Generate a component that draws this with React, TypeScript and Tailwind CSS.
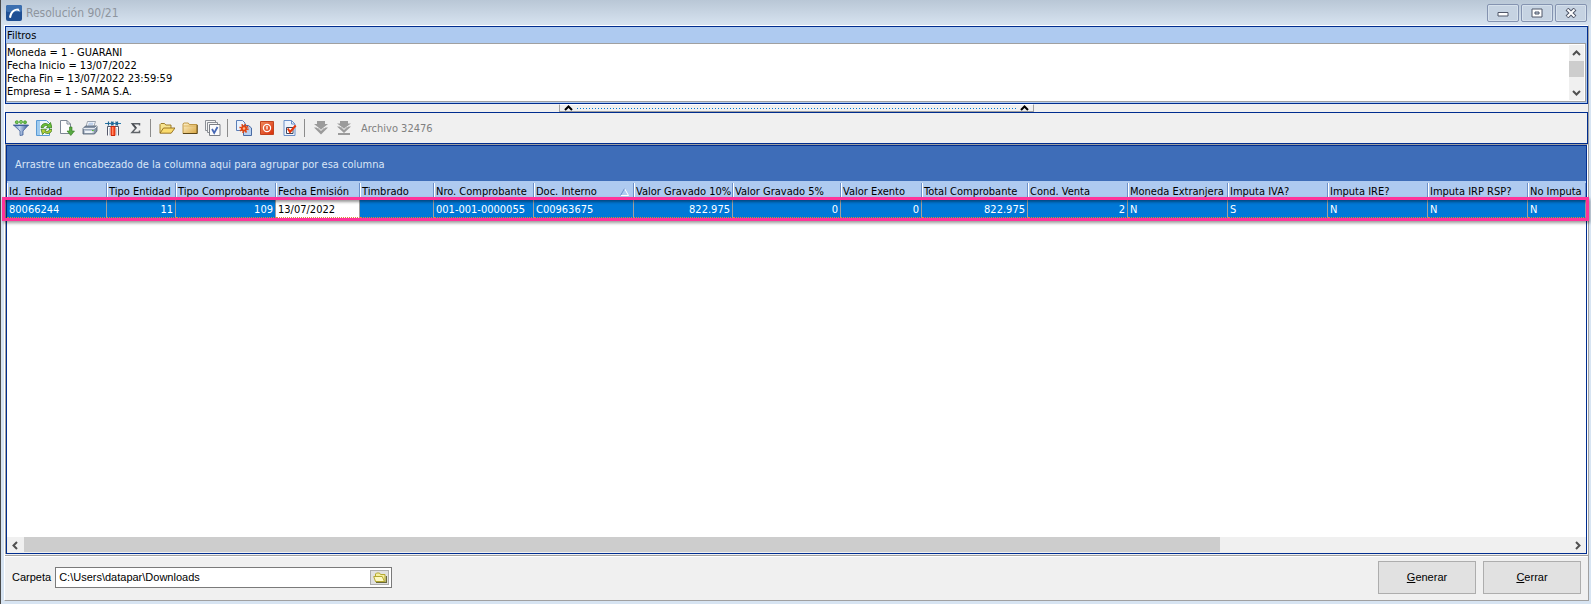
import { useState } from "react";
import type { ReactNode } from "react";

type Column = {
  title: string;
  value: string;
  width?: string;
  right?: boolean;
  sorted?: boolean;
};

const columns: Column[] = [
  { title: "Id. Entidad", value: "80066244", width: "w-[100px]" },
  { title: "Tipo Entidad", value: "11", width: "w-[69px]", right: true },
  { title: "Tipo Comprobante", value: "109", width: "w-[100px]", right: true },
  { title: "Fecha Emisión", value: "13/07/2022", width: "w-[84px]" },
  { title: "Timbrado", value: "", width: "w-[74px]" },
  { title: "Nro. Comprobante", value: "001-001-0000055", width: "w-[100px]" },
  { title: "Doc. Interno", value: "C00963675", width: "w-[100px]", sorted: true },
  { title: "Valor Gravado 10%", value: "822.975", width: "w-[99px]", right: true },
  { title: "Valor Gravado 5%", value: "0", width: "w-[108px]", right: true },
  { title: "Valor Exento", value: "0", width: "w-[81px]", right: true },
  { title: "Total Comprobante", value: "822.975", width: "w-[106px]", right: true },
  { title: "Cond. Venta", value: "2", width: "w-[100px]", right: true },
  { title: "Moneda Extranjera", value: "N", width: "w-[100px]" },
  { title: "Imputa IVA?", value: "S", width: "w-[100px]" },
  { title: "Imputa IRE?", value: "N", width: "w-[100px]" },
  { title: "Imputa IRP RSP?", value: "N", width: "w-[100px]" },
  { title: "No Imputa", value: "N" },
];

const filters = [
  "Moneda = 1 - GUARANI",
  "Fecha Inicio = 13/07/2022",
  "Fecha Fin = 13/07/2022 23:59:59",
  "Empresa = 1 - SAMA S.A.",
].join("\n");

const Icon = ({ children }: { children: ReactNode }) => (
  <svg width="16" height="16" viewBox="0 0 16 16" fill="none">
    {children}
  </svg>
);

const FilterIcon = () => (
  <Icon>
    <defs>
      <linearGradient id="funnel" x1="0" x2="1" y1="0" y2="0">
        <stop offset="0" stopColor="#5f82bb" />
        <stop offset=".4" stopColor="#c3d5ef" />
        <stop offset="1" stopColor="#2f5090" />
      </linearGradient>
    </defs>
    <circle cx="3.800" cy="2.200" r="1.500" fill="#7cc65a" stroke="#3f9a2a" strokeWidth=".8" />
    <circle cx="8" cy="1.900" r="1.500" fill="#8fd070" stroke="#3f9a2a" strokeWidth=".8" />
    <circle cx="12" cy="2.300" r="1.500" fill="#6bbb4c" stroke="#3f9a2a" strokeWidth=".8" />
    <path d="M.5 5h15L10 11v4l-3 .5V11z" fill="url(#funnel)" stroke="#3f609b" strokeWidth=".8" />
    <path d="M.5 5.500h15" stroke="#3f609b" />
  </Icon>
);

const RefreshIcon = () => (
  <Icon>
    <path d="M.5.5h10l3 3v12H.5z" fill="#eef6fd" stroke="#5a9bd6" />
    <path d="M1 1h3v14H1z" fill="#9fcbef" />
    <path d="M5 7.500C5.500 3.500 9.500 2.500 12.500 4.500L14.500 2.500 16 7.800h-5.500L12 6.200C10 5 8 5.500 7.500 7.500z" fill="#6cc23a" stroke="#2a7312" strokeWidth=".7" />
    <path d="M16 9.500c-.5 4-4.500 5-7.500 3L6.500 14.500 5 9.200h5.500L9 10.800c2 1.200 4 .7 4.500-1.300z" fill="#b5cf3a" stroke="#2a7312" strokeWidth=".7" />
  </Icon>
);

const ExportIcon = () => (
  <Icon>
    <path d="M1.500.5h6.500l3.500 3.500v9.500h-10z" fill="#fdfdfd" stroke="#7d8794" />
    <path d="M8 .5V4h3.500" stroke="#7d8794" />
    <path d="M10.500 7H13v4h2.500l-3.700 4.500L8 11h2.500z" fill="#58a843" stroke="#2f7a1c" strokeWidth=".6" />
  </Icon>
);

const PrinterIcon = () => (
  <Icon>
    <path d="M5.500 1.500h8L11.500 7H4z" fill="#fff" stroke="#7f8a99" strokeWidth=".8" />
    <path d="M6.500 3.200h5M6 4.900h5" stroke="#86a8d8" strokeWidth=".8" />
    <path d="M1 8.500L3.500 6H15v5l-2.500 3H1z" fill="#8795a8" stroke="#4f5d70" strokeWidth=".8" />
    <path d="M1.500 8.600h10.800L14.800 6.400" stroke="#f2f5f9" />
    <path d="M2 9.700h10v3.500H2z" fill="#b8c3d2" />
    <path d="M3 11h7.500v2H3z" fill="#eef3f8" />
    <path d="M10 10h1.700v1H10z" fill="#4fc02a" />
  </Icon>
);

const ColumnsIcon = () => (
  <Icon>
    <path d="M0 3.500h16" stroke="#2b7cae" />
    <path d="M3.500 1.500v4M1.500 3.500h3M8 1.500v4M12.500 1.500v4M6 1.800l2 1.700-2 1.700M10.500 1.800l2 1.700-2 1.700" stroke="#1f6694" strokeWidth="1.200" />
    <path d="M2.500 15.500v-9h11v9" fill="#fff" stroke="#55596a" />
    <path d="M6 6.500h4v9H6z" fill="#ff4a1f" stroke="#c92a10" />
    <path d="M7.200 7h1v8h-1z" fill="#ff9a7a" />
    <path d="M4.500 8v7.500M11.700 8v7.500" stroke="#c4c8d4" />
  </Icon>
);

const SumIcon = () => (
  <Icon>
    <path d="M11.500 5.500V3.800H4.300L8 8l-4 4.500h7.500v-2" stroke="#5f6368" strokeWidth="1.500" />
    <path d="M4.500 4L8 8" stroke="#4a4d52" strokeWidth="1.800" />
  </Icon>
);

const FolderOpenIcon = () => (
  <Icon>
    <path d="M1 13V4.500l1-1h3.500l1.300 1.500H12v3" fill="#f7e48f" stroke="#94731c" strokeWidth=".9" />
    <path d="M1 13.200L4.500 8H16l-3.800 5.200z" fill="#fbdc6e" stroke="#8f6a1c" strokeWidth=".9" />
  </Icon>
);

const FolderIcon = () => (
  <Icon>
    <defs>
      <linearGradient id="folder" x1="0" x2="1" y1="0" y2="1">
        <stop offset="0" stopColor="#fff3cf" />
        <stop offset="1" stopColor="#d9a640" />
      </linearGradient>
    </defs>
    <path d="M1 4l.8-1h4.500l1 1.500H15v9H1z" fill="url(#folder)" stroke="#b98e38" strokeWidth=".9" />
    <path d="M1.500 6h13" stroke="#d8ae56" strokeWidth=".8" />
    <path d="M1 13.500h14.200V5" stroke="#5d4718" />
  </Icon>
);

const CheckAllIcon = () => (
  <Icon>
    <path d="M.5.500h10v10H.5z" fill="#f4f4f4" stroke="#8b8f95" />
    <path d="M2.500 2.500h10v10h-10z" fill="#f4f4f4" stroke="#8b8f95" />
    <path d="M4.500 4.500h10.500v11H4.500z" fill="#fbfbfb" stroke="#7b7f86" />
    <path d="M7 9l2.200 4L12.500 7" stroke="#4668b5" strokeWidth="1.800" />
  </Icon>
);

const ProcessIcon = () => (
  <Icon>
    <path d="M.5.5h6L9 3v7.500H.5z" fill="#eaf2fd" stroke="#5a7fb8" />
    <path d="M7.500 5.500h5L15.500 8v7.500h-8z" fill="#b9d1f1" stroke="#4a6ba3" />
    <circle cx="8" cy="8.500" r="3.700" stroke="#e2450f" strokeWidth="2" strokeDasharray="1.450 1.450" />
    <circle cx="8" cy="8.500" r="2.200" fill="#ffb48a" stroke="#e2450f" strokeWidth="1.800" />
  </Icon>
);

const PowerIcon = () => (
  <Icon>
    <defs>
      <linearGradient id="power" x1="0" x2="1" y1="0" y2="1">
        <stop offset="0" stopColor="#f08a5c" />
        <stop offset="1" stopColor="#d92c08" />
      </linearGradient>
    </defs>
    <path d="M1.500 1.500h13v13h-13z" fill="url(#power)" stroke="#c0431f" />
    <circle cx="8" cy="8" r="3.600" stroke="#fff" strokeWidth="1.200" />
    <path d="M8 6v3.500" stroke="#fff" strokeWidth="1.300" />
  </Icon>
);

const ReportCheckIcon = () => (
  <Icon>
    <path d="M2 .5h7.500L13 4v11.500H2z" fill="#eef4fd" stroke="#6a90c9" />
    <path d="M9.500.5V4H13" stroke="#6a90c9" />
    <path d="M4.500 7.500h6.500v6H4.500z" fill="#fff" stroke="#3d4a66" />
    <path d="M5.800 8.500L8 12l5.700-6.500" stroke="#e8380c" strokeWidth="2" />
  </Icon>
);

const DownIcon = () => (
  <Icon>
    <path d="M4 1h8v3h3L8 9.500 1 4h3z" fill="#9b9b9b" />
    <path d="M1 7.500h2.500L8 11l4.500-3.500H15L8 14.500z" fill="#9b9b9b" />
    <path d="M5 8l3 2.500L11 8" stroke="#bdbdbd" />
  </Icon>
);

const DownAllIcon = () => (
  <Icon>
    <path d="M4 1h8v2.500h3L8 8.500 1 3.500h3z" fill="#9b9b9b" />
    <path d="M1 6.500h2.500L8 10l4.500-3.500H15L8 13z" fill="#9b9b9b" />
    <path d="M5 7l3 2.500L11 7" stroke="#bdbdbd" />
    <path d="M2 13h12v2H2z" fill="#9b9b9b" />
  </Icon>
);

const toolGroups = [
  [
    { label: "Filtrar", icon: <FilterIcon /> },
    { label: "Actualizar", icon: <RefreshIcon /> },
    { label: "Exportar", icon: <ExportIcon /> },
    { label: "Imprimir", icon: <PrinterIcon /> },
    { label: "Columnas", icon: <ColumnsIcon /> },
    { label: "Totales", icon: <SumIcon /> },
  ],
  [
    { label: "Abrir", icon: <FolderOpenIcon /> },
    { label: "Carpeta de archivos", icon: <FolderIcon /> },
    { label: "Marcar todos", icon: <CheckAllIcon /> },
  ],
  [
    { label: "Procesar", icon: <ProcessIcon /> },
    { label: "Detener", icon: <PowerIcon /> },
    { label: "Verificar", icon: <ReportCheckIcon /> },
  ],
  [
    { label: "Bajar", icon: <DownIcon /> },
    { label: "Bajar todo", icon: <DownAllIcon /> },
  ],
];

const arrowPaths = {
  up: "M1 6l3.500-3.500L8 6",
  down: "M1 3l3.500 3.500L8 3",
  left: "M6 1L2.500 4.500 6 8",
  right: "M3 1l3.500 3.500L3 8",
};

const Arrow = ({ dir, color = "#505050" }: { dir: keyof typeof arrowPaths; color?: string }) => (
  <svg width="9" height="9" viewBox="0 0 9 9" fill="none">
    <path d={arrowPaths[dir]} stroke={color} strokeWidth="2" />
  </svg>
);

const WindowButton = ({ label, children }: { label: string; children: ReactNode }) => (
  <button
    aria-label={label}
    className="w-8 h-[18px] flex items-center justify-center rounded-[2px] border border-[#8493b0] bg-[#c6d3e2] shadow-[inset_0_0_0_1px_#d6e1ec]"
  >
    <svg width="12" height="10" viewBox="0 0 12 10" fill="none">
      {children}
    </svg>
  </button>
);

const TitleBar = () => (
  <header className="h-[25px] shrink-0 flex items-start justify-between pl-[5px] pr-1 bg-linear-to-b from-[#b9c7d6] to-[#d7e3f0]">
    <div className="flex items-center gap-1 pt-[5px]">
      <svg width="16" height="16" viewBox="0 0 16 16">
        <rect width="16" height="16" rx="2" fill="#1f4f94" />
        <rect width="16" height="7" rx="2" fill="#3b6fb0" />
        <path d="M3 12.500C4 7 6.500 3.500 12.500 3.500l1.500 3-3-1C7.500 6 6 8.500 5 13z" fill="#fff" />
      </svg>
      <h1 className="text-[12px] leading-4 text-[#8e959e]">Resolución 90/21</h1>
    </div>
    <div className="flex gap-[2px] pt-1">
      <WindowButton label="Minimizar">
        <path d="M1 4.500h10v3.500H1z" fill="#fff" stroke="#4f5668" />
      </WindowButton>
      <WindowButton label="Maximizar">
        <path d="M1 1h10v8H1z" fill="#fff" stroke="#4f5668" />
        <path d="M4 4h4v2H4z" fill="#c6d3e2" stroke="#4f5668" />
      </WindowButton>
      <WindowButton label="Cerrar ventana">
        <path d="M2 1l8 8M10 1L2 9" stroke="#4f5668" strokeWidth="4" />
        <path d="M2.500 1.500l7 7M9.500 1.500l-7 7" stroke="#fff" strokeWidth="2" />
      </WindowButton>
    </div>
  </header>
);

const FiltersPanel = () => (
  <section className="shrink-0 border border-[#002d8f] bg-[#aecaf0] pb-px pr-px">
    <label htmlFor="filtros" className="block h-4 pl-px leading-[18px]">
      Filtros
    </label>
    <div className="flex h-[59px] bg-white border border-[#a0a0a0]">
      <textarea
        id="filtros"
        readOnly
        value={filters}
        className="flex-1 resize-none overflow-hidden pt-[2px] leading-[13px] outline-none"
      />
      <div className="w-[15px] my-px mr-px flex flex-col bg-[#f0f0f0]">
        <button aria-label="Subir" className="h-4 flex items-center justify-center">
          <Arrow dir="up" />
        </button>
        <div className="h-4 bg-[#cdcdcd]" />
        <div className="flex-1" />
        <button aria-label="Bajar lista" className="h-4 flex items-center justify-center">
          <Arrow dir="down" />
        </button>
      </div>
    </div>
  </section>
);

const Splitter = () => (
  <div className="h-2 shrink-0 flex justify-center">
    <button
      aria-label="Ocultar filtros"
      className="w-[30%] flex items-center gap-1 px-1 border border-t-white border-l-[#a0a0a0] border-r-[#a0a0a0] border-b-[#a0a0a0]"
    >
      <Arrow dir="up" color="#000" />
      <span className="flex-1 h-px bg-[repeating-linear-gradient(90deg,#0078d7_0_1px,transparent_1px_3px)]" />
      <Arrow dir="up" color="#000" />
    </button>
  </div>
);

const Toolbar = () => (
  <div className="h-8 shrink-0 flex items-center border border-[#002d8f] pl-[3px]">
    {toolGroups.map((group, index) => (
      <div key={index} className="flex items-center">
        {index > 0 && <span className="w-px h-[18px] ml-[3px] mr-1 bg-[#8c8c8c]" />}
        {group.map((tool) => (
          <button
            key={tool.label}
            aria-label={tool.label}
            className="w-[23px] h-[22px] flex items-center justify-center"
          >
            {tool.icon}
          </button>
        ))}
      </div>
    ))}
    <span className="pl-[6px] pt-[2px] text-[#808080]">Archivo 32476</span>
  </div>
);

const Grid = () => (
  <section className="flex-1 min-h-0 flex flex-col border-t border-l border-r border-t-[#a0a0a0] border-l-[#a0a0a0] border-r-white">
    <div className="flex-1 min-h-0 flex flex-col border border-[#002d8f] bg-white">
      <div className="h-[35px] shrink-0 flex items-center pl-2 pt-[3px] bg-[#3e6db8] text-[#d9e6f7]">
        Arrastre un encabezado de la columna aqui para agrupar por esa columna
      </div>
      <div className="flex-1 min-h-0 relative">
        <table className="w-full table-fixed border-collapse">
          <thead>
            <tr className="h-[19px] bg-[#aecaf0]">
              {columns.map((col) => (
                <th key={col.title} className={`${col.width ?? ""} p-0 font-normal text-left`}>
                  <div className="h-[17px] leading-[17px] mt-[2px] flex items-center justify-between pl-px border-l border-l-white border-r border-r-[#6b8fc9] whitespace-nowrap overflow-hidden">
                    {col.title}
                    {col.sorted && (
                      <svg width="9" height="8" viewBox="0 0 9 8" fill="none" className="mr-1">
                        <path d="M.5 7.500h8L4.500.5" stroke="#fff" />
                        <path d="M4.500.5L.5 7.500" stroke="#6b8fc9" />
                      </svg>
                    )}
                  </div>
                </th>
              ))}
            </tr>
          </thead>
          <tbody>
            <tr className="h-[18px] bg-[#0078d7] text-white">
              {columns.map((col) => (
                <td
                  key={col.title}
                  className={`p-0 ${col.title === "Fecha Emisión" ? "bg-white text-black" : ""}`}
                >
                  <div
                    className={`h-[18px] leading-5 px-[2px] border-r border-r-[#a0a0a0] border-b border-b-[#e08a3c] [border-bottom-style:dotted] whitespace-nowrap ${
                      col.right ? "text-right" : ""
                    }`}
                  >
                    {col.value}
                  </div>
                </td>
              ))}
            </tr>
          </tbody>
        </table>
        {/* highlight frame laid over the selected row */}
        <div className="absolute top-4 -left-[5px] -right-[3px] h-6 border-[3px] border-[#ff3399] pointer-events-none shadow-[1px_2px_3px_#00000066,inset_1px_2px_3px_#00000066]" />
      </div>
      <div className="h-4 shrink-0 flex bg-[#f0f0f0]">
        <button aria-label="Izquierda" className="w-[17px] flex items-center justify-center">
          <Arrow dir="left" />
        </button>
        <div className="flex-1 pb-px">
          <div className="w-[77.4%] h-full bg-[#cdcdcd]" />
        </div>
        <button aria-label="Derecha" className="w-[17px] flex items-center justify-center">
          <Arrow dir="right" />
        </button>
      </div>
    </div>
  </section>
);

const Footer = () => {
  const [folder, setFolder] = useState("C:\\Users\\datapar\\Downloads");

  return (
    <footer className="shrink-0 mt-px flex items-center justify-between h-[45px] border-t border-[#a0a0a0] pl-[7px] pr-[7px] pb-[2px] font-['Liberation_Sans',Arial,sans-serif] shadow-[inset_0_1px_0_#fff]">
      <div className="flex items-center gap-1">
        <label htmlFor="carpeta">Carpeta</label>
        <div className="w-[337px] h-[21px] flex items-center bg-white border border-[#7a7a7a] pl-[3px] pr-[2px]">
          <input
            id="carpeta"
            value={folder}
            onChange={(e) => setFolder(e.target.value)}
            className="flex-1 outline-none"
          />
          <button
            aria-label="Buscar carpeta"
            className="w-[19px] h-[15px] flex items-center justify-center bg-[#e1e1e1] border border-[#adadad]"
          >
            <svg width="14" height="11" viewBox="0 0 14 11" fill="none">
              <path d="M3 10.500h10.500V4" stroke="#6b6b3a" strokeWidth="1.500" />
              <path d="M2.500 9.500V2l1-1h3l1 1.500h4.500v7z" fill="#f5efa0" stroke="#b5a832" />
              <path d="M2.500 9.500L.7 4.500h8.500l2.300 5z" fill="#fdf9c4" stroke="#b5a832" />
            </svg>
          </button>
        </div>
      </div>
      <div className="flex gap-[7px]">
        <button className="w-[98px] h-[33px] bg-[#e1e1e1] border border-[#adadad]">
          <span className="underline">G</span>enerar
        </button>
        <button className="w-[98px] h-[33px] bg-[#e1e1e1] border border-[#adadad]">
          <span className="underline">C</span>errar
        </button>
      </div>
    </footer>
  );
};

const App = () => {
  return (
    <div className="h-screen flex flex-col bg-[#d7e4f2] border-l border-[#4a4a4a] pb-[3px] text-[11px] text-black font-[Tahoma,'DejaVu_Sans_Condensed','DejaVu_Sans',sans-serif]">
      <TitleBar />
      <main className="flex-1 min-h-0 flex flex-col ml-[3px] mr-[2px] bg-[#f0f0f0] border border-t-white border-l-white border-r-[#a0a0a0] border-b-[#a0a0a0]">
        <FiltersPanel />
        <Splitter />
        <Toolbar />
        <Grid />
        <Footer />
      </main>
    </div>
  );
};

export default App;
